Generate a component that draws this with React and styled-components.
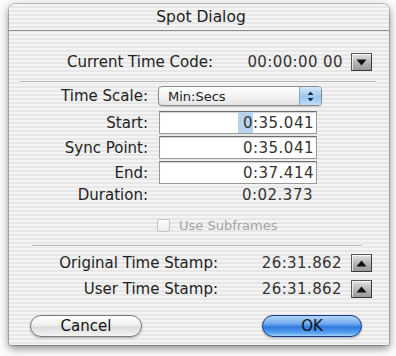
import React from "react";
import styled, { createGlobalStyle } from "styled-components";

const Global = createGlobalStyle`
  html, body { margin: 0; padding: 0; background: #fbfbfb; }
  body { font-family: "DejaVu Sans", "Liberation Sans", sans-serif; }
`;

const Stage = styled.div`
  width: 396px;
  height: 356px;
  padding: 4px 0 0 9px;
  box-sizing: border-box;
`;

const Window = styled.div`
  width: 380px;
  height: 341px;
  border-radius: 6px 6px 3px 3px;
  background: repeating-linear-gradient(
    to bottom,
    #f4f4f4 0px,
    #f4f4f4 2px,
    #e7e7e7 2px,
    #e7e7e7 4px
  );
  box-shadow: 0 3px 9px rgba(0, 0, 0, 0.5), 0 0 0 1px rgba(0, 0, 0, 0.18);
  display: flex;
  flex-direction: column;
  overflow: hidden;
`;

const TitleBar = styled.div`
  height: 26px;
  border-bottom: 1px solid #8c8c8c;
  display: flex;
  align-items: center;
  justify-content: center;
  font-size: 15.5px;
  color: #1e1e1e;
  padding-left: 4px;
`;

const Content = styled.div`
  display: flex;
  flex-direction: column;
`;

const ValueRow = styled.div`
  display: grid;
  grid-template-columns: ${(p) => p.$cols};
  align-items: center;
  row-gap: 8px;
  font-size: 15px;
  margin-top: ${(p) => p.$mt}px;
  & > *:nth-child(3n) {
    justify-self: end;
  }
`;

const Label = styled.span`
  text-align: right;
  color: #222;
  white-space: nowrap;
`;

const Value = styled.span`
  color: #333;
  white-space: nowrap;
  text-align: right;
  letter-spacing: 0.4px;
`;

const Divider = styled.div`
  height: 1px;
  background: #b4b4b4;
  border-bottom: 1px solid #fafafa;
  margin: ${(p) => p.$m};
`;

const FormGrid = styled.div`
  display: grid;
  grid-template-columns: 139px auto;
  column-gap: 10px;
  align-items: center;
  font-size: 15px;
  margin-top: 3px;
`;

const Cell = styled.div`
  height: ${(p) => p.$h}px;
  margin-top: ${(p) => p.$mt || 0}px;
  display: flex;
  align-items: center;
  justify-content: ${(p) => (p.$start ? "flex-start" : "flex-end")};
`;

const Popup = styled.div`
  width: 164px;
  height: 20px;
  box-sizing: border-box;
  border: 1px solid #8a8a8a;
  border-radius: 4px;
  background: linear-gradient(#ffffff, #f1f1f1 60%, #e4e4e4);
  display: flex;
  align-items: stretch;
  overflow: hidden;
  box-shadow: 0 1px 1px rgba(0, 0, 0, 0.15);
`;

const PopupText = styled.span`
  flex: 1;
  font-size: 13px;
  color: #222;
  padding-left: 9px;
  display: flex;
  align-items: center;
`;

const PopupArrows = styled.span`
  width: 21px;
  background: linear-gradient(#d5e8fb, #9cc6f0 55%, #bfdcf8);
  border-left: 1px solid #7ea7d2;
  display: flex;
  align-items: center;
  justify-content: center;
`;

const Field = styled.div`
  width: 158px;
  height: 23px;
  box-sizing: border-box;
  background: #fff;
  border: 1px solid #9a9a9a;
  border-top-color: #6e6e6e;
  box-shadow: inset 0 1px 1px rgba(0, 0, 0, 0.18);
  margin-left: 1px;
  display: flex;
  align-items: stretch;
  justify-content: flex-end;
  padding-right: 2px;
  font-size: 15px;
  letter-spacing: 0.5px;
  color: #333;
`;

const FieldText = styled.span`
  display: flex;
  align-items: center;
`;

const Sel = styled.span`
  background: #b9d3ee;
  padding-left: 5px;
  display: flex;
  align-items: center;
`;

const PlainValue = styled.span`
  width: 158px;
  text-align: right;
  padding-right: 3px;
  box-sizing: border-box;
  color: #333;
  letter-spacing: 0.5px;
`;

const CheckRow = styled.div`
  margin-top: 14px;
  height: 14px;
  display: flex;
  align-items: center;
  padding-left: 148px;
  gap: 9px;
  color: #a4a4a4;
  font-size: 13px;
`;

const CheckBox = styled.span`
  width: 13px;
  height: 13px;
  box-sizing: border-box;
  border: 1px solid #c4c4c4;
  border-radius: 2px;
  background: linear-gradient(#fdfdfd, #ececec);
`;

const ArrowBtn = styled.span`
  width: 21px;
  height: 18px;
  box-sizing: border-box;
  border: 1px solid #5a5a5a;
  border-right-color: #3a3a3a;
  border-bottom-color: #3a3a3a;
  background: linear-gradient(#e2e2e2, #b8b8b8 50%, #9a9a9a);
  display: flex;
  align-items: center;
  justify-content: center;
  box-shadow: inset 1px 1px 0 rgba(255, 255, 255, 0.7);
`;

const ButtonRow = styled.div`
  margin-top: 17px;
  display: flex;
  justify-content: space-between;
  padding: 0 27px 0 21px;
`;

const PillButton = styled.button`
  width: ${(p) => p.$w}px;
  height: 22px;
  border-radius: 11px;
  font-family: "DejaVu Sans", sans-serif;
  font-size: 15px;
  color: #111;
  padding: 0;
  cursor: default;
  border: 1px solid ${(p) => (p.$primary ? "#163a8a" : "#7a7a7a")};
  background: ${(p) =>
    p.$primary
      ? "linear-gradient(#b6d6f8 0%, #6aa6ec 40%, #2f78de 55%, #5aa3f0 85%, #9fd0fb 100%)"
      : "linear-gradient(#ffffff 0%, #f0f0f0 45%, #dcdcdc 55%, #f4f4f4 100%)"};
  box-shadow: 0 1px 2px rgba(0, 0, 0, 0.3);
`;

const Tri = ({ up }) => (
  <svg width="11" height="7" viewBox="0 0 11 7">
    {up ? (
      <path d="M0.5 6.5 L5.5 0.5 L10.5 6.5 Z" fill="#111" />
    ) : (
      <path d="M0.5 0.5 L5.5 6.5 L10.5 0.5 Z" fill="#111" />
    )}
  </svg>
);

const UpDown = () => (
  <svg width="7" height="11" viewBox="0 0 7 11">
    <path d="M0.5 4 L3.5 0.5 L6.5 4 Z" fill="#1a2a45" />
    <path d="M0.5 7 L3.5 10.5 L6.5 7 Z" fill="#1a2a45" />
  </svg>
);

export default function App() {
  return (
    <>
      <Global />
      <Stage>
        <Window>
          <TitleBar>Spot Dialog</TitleBar>
          <Content>
            <ValueRow $cols="204px 130px 29px" $mt={22}>
              <Label>Current Time Code:</Label>
              <Value>00:00:00 00</Value>
              <ArrowBtn>
                <Tri />
              </ArrowBtn>
            </ValueRow>
            <Divider $m="10px 13px 0 11px" />
            <FormGrid>
              <Cell $h={20}>
                <Label>Time Scale:</Label>
              </Cell>
              <Cell $h={20} $start>
                <Popup>
                  <PopupText>Min:Secs</PopupText>
                  <PopupArrows>
                    <UpDown />
                  </PopupArrows>
                </Popup>
              </Cell>

              <Cell $h={23} $mt={5}>
                <Label>Start:</Label>
              </Cell>
              <Cell $h={23} $mt={5} $start>
                <Field>
                  <Sel>0</Sel>
                  <FieldText>:35.041</FieldText>
                </Field>
              </Cell>

              <Cell $h={23} $mt={2}>
                <Label>Sync Point:</Label>
              </Cell>
              <Cell $h={23} $mt={2} $start>
                <Field>
                  <FieldText>0:35.041</FieldText>
                </Field>
              </Cell>

              <Cell $h={23} $mt={2}>
                <Label>End:</Label>
              </Cell>
              <Cell $h={23} $mt={2} $start>
                <Field>
                  <FieldText>0:37.414</FieldText>
                </Field>
              </Cell>

              <Cell $h={18} $mt={2}>
                <Label>Duration:</Label>
              </Cell>
              <Cell $h={18} $mt={2} $start>
                <PlainValue>0:02.373</PlainValue>
              </Cell>
            </FormGrid>
            <CheckRow>
              <CheckBox />
              <span>Use Subframes</span>
            </CheckRow>
            <Divider $m="13px 27px 0 23px" />
            <ValueRow $cols="209px 124px 30px" $mt={7}>
              <Label>Original Time Stamp:</Label>
              <Value>26:31.862</Value>
              <ArrowBtn>
                <Tri up />
              </ArrowBtn>
              <Label>User Time Stamp:</Label>
              <Value>26:31.862</Value>
              <ArrowBtn>
                <Tri up />
              </ArrowBtn>
            </ValueRow>
            <ButtonRow>
              <PillButton $w={112}>Cancel</PillButton>
              <PillButton $w={100} $primary>
                OK
              </PillButton>
            </ButtonRow>
          </Content>
        </Window>
      </Stage>
    </>
  );
}
